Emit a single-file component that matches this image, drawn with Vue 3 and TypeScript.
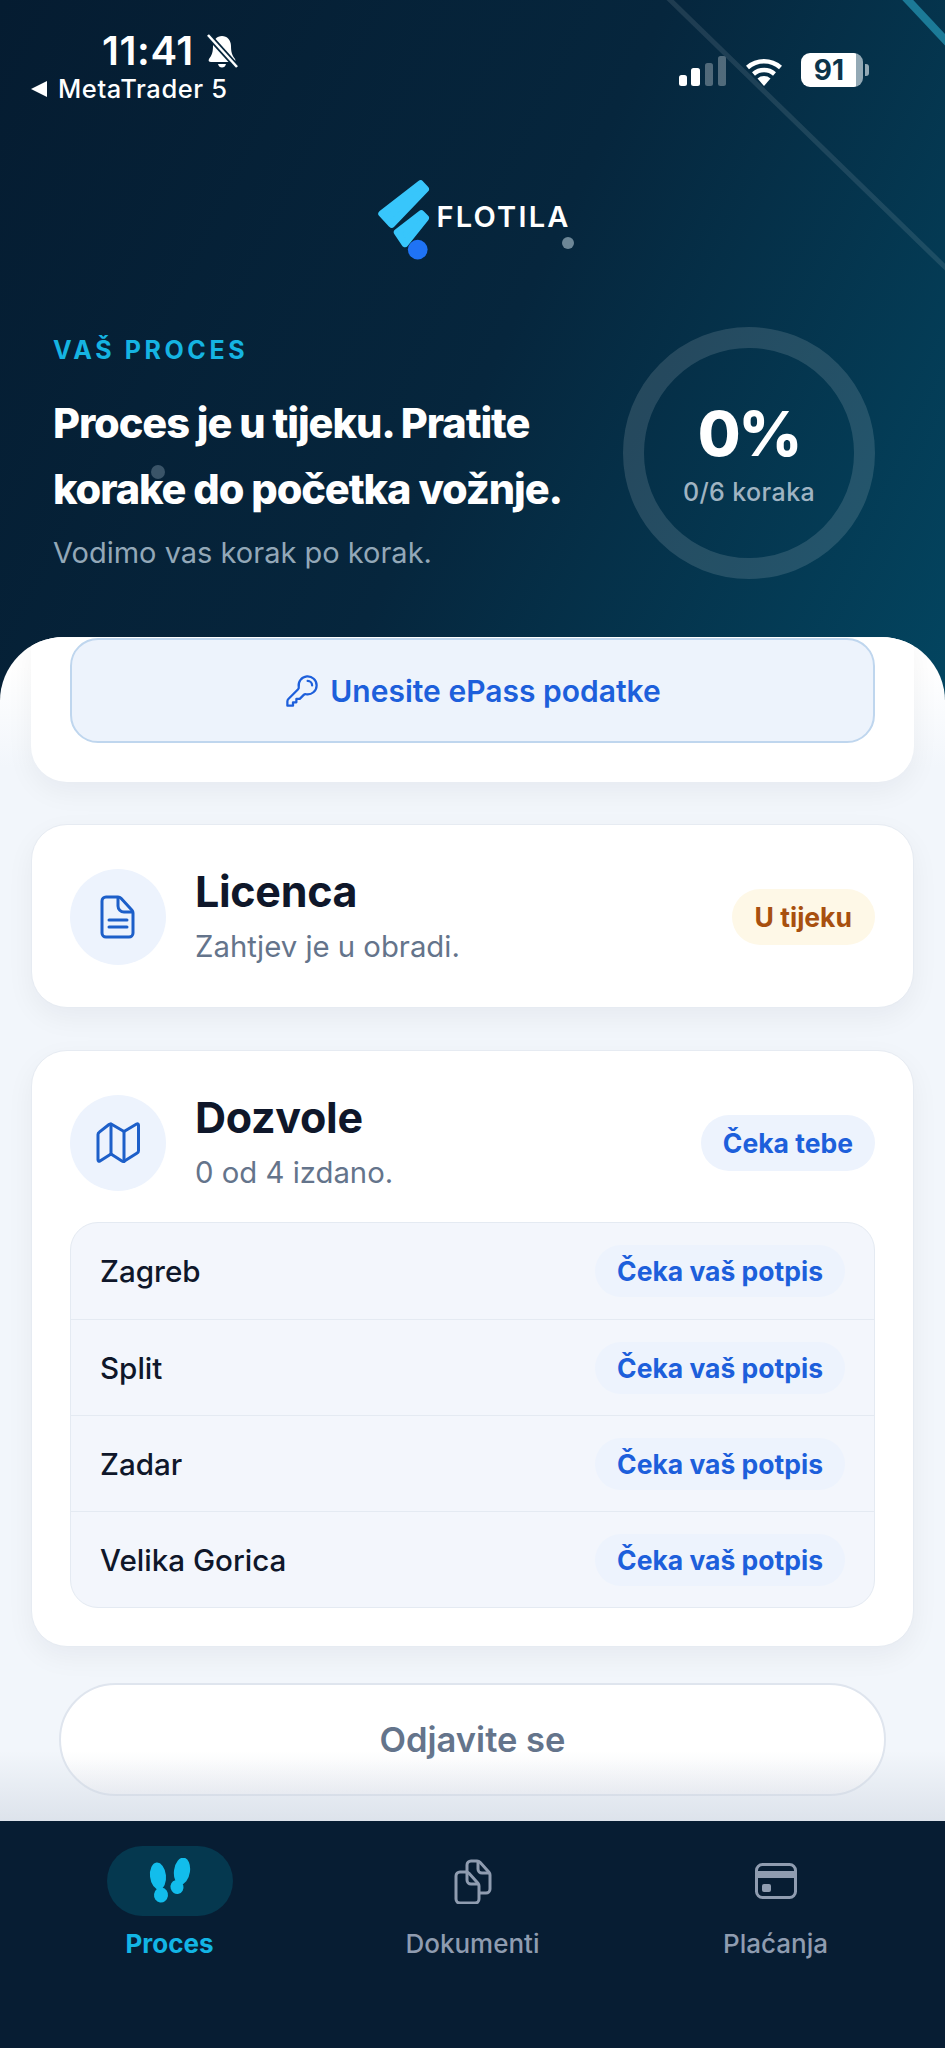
<template>
  <div class="page">
    <div class="streaks" aria-hidden="true">
      <svg width="945" height="640" viewBox="0 0 945 640">
        <line x1="666" y1="-4" x2="949" y2="271" stroke="#ffffff" stroke-opacity="0.1" stroke-width="5" />
        <line x1="904" y1="-4" x2="949" y2="44" stroke="#2fb4d6" stroke-opacity="0.55" stroke-width="8" />
        <circle cx="568" cy="243" r="6" fill="#6d8797" />
        <circle cx="158" cy="472" r="7" fill="#3a5468" />
      </svg>
    </div>

    <header class="hero">
      <div class="status">
        <div class="status-left">
          <div class="clock">
            <span>11:41</span>
            <svg class="bell" viewBox="0 0 32 34" width="32" height="34">
              <path d="M16 2c-5 0-9 4-9 10 0 6-1 9-4 13-1 2 0 3 2 3h22c2 0 3-1 2-3-3-4-4-7-4-13 0-6-4-10-9-10z" fill="#fff" />
              <path d="M12 30h8c-.6 2.400-2 3.600-4 3.600s-3.400-1.200-4-3.600z" fill="#fff" />
              <path d="M2 1l29 32" stroke="#06253b" stroke-width="6" />
              <path d="M2 1l29 32" stroke="#fff" stroke-width="2.600" />
            </svg>
          </div>
          <div class="back-app">
            <svg viewBox="0 0 18 18" width="18" height="18"><path d="M17 1v16L1 9z" fill="#fff" /></svg>
            <span>MetaTrader 5</span>
          </div>
        </div>
        <div class="status-right">
          <svg viewBox="0 0 48 31" width="48" height="31">
            <rect x="0" y="20" width="8" height="11" rx="2.500" fill="#fff" />
            <rect x="12" y="13" width="9" height="18" rx="2.500" fill="#fff" />
            <rect x="26" y="8" width="8" height="23" rx="2.500" fill="#fff" fill-opacity="0.3" />
            <rect x="39" y="1" width="8" height="30" rx="2.500" fill="#fff" fill-opacity="0.3" />
          </svg>
          <svg viewBox="0 0 42 31" width="42" height="31">
            <path d="M21 31l-6.500-7.500a10 10 0 0 1 13 0z" fill="#fff" />
            <path d="M10.500 19a16 16 0 0 1 21 0" fill="none" stroke="#fff" stroke-width="4.500" />
            <path d="M4.500 12.500a25 25 0 0 1 33 0" fill="none" stroke="#fff" stroke-width="4.500" />
          </svg>
          <div class="battery">
            <div class="battery-body"><span>91</span></div>
            <i class="battery-nub"></i>
          </div>
        </div>
      </div>

      <div class="brand">
        <svg class="brand-mark" viewBox="100 50 170 250" width="60" height="88">
          <g fill="#38c6fb" stroke="#38c6fb" stroke-width="20" stroke-linejoin="round">
            <polygon points="232,75 246,90 150,190 122,160" />
            <polygon points="234,160 246,172 188,245 166,213" />
          </g>
          <circle cx="224" cy="262" r="28" fill="#1f73f5" />
        </svg>
        <span class="brand-name">FLOTILA</span>
      </div>

      <div class="summary">
        <div class="summary-copy">
          <p class="eyebrow">VAŠ PROCES</p>
          <h1>Proces je u tijeku. Pratite<br />korake do početka vožnje.</h1>
          <p class="lead">Vodimo vas korak po korak.</p>
        </div>
        <div class="ring">
          <strong>0%</strong>
          <span>0/6 koraka</span>
        </div>
      </div>
    </header>

    <main class="sheet">
      <section class="card card-clipped">
        <button type="button" class="epass">
          <svg viewBox="0 0 24 24" width="36" height="36" fill="none" stroke="currentColor" stroke-width="1.500" stroke-linecap="round" stroke-linejoin="round">
            <path d="M15.750 5.250a3 3 0 0 1 3 3m3 0a6 6 0 0 1-7.029 5.912c-.563-.097-1.159.026-1.563.43L10.500 17.250H8.250v2.250H6v2.250H2.250v-2.818c0-.597.237-1.170.659-1.591l6.499-6.499c.404-.404.527-1 .43-1.563A6 6 0 1 1 21.750 8.250z" />
          </svg>
          <span>Unesite ePass podatke</span>
        </button>
      </section>

      <section class="card">
        <div class="card-head">
          <div class="icon-circle">
            <svg viewBox="0 0 36 44" width="36" height="44" fill="none" stroke="currentColor" stroke-width="3" stroke-linejoin="round" stroke-linecap="round">
              <path d="M6 2h12a4 4 0 0 1 3 1.300l11 12a4 4 0 0 1 1 2.700v20a4 4 0 0 1-4 4H6a4 4 0 0 1-4-4V6a4 4 0 0 1 4-4z" />
              <path d="M18 2.500V11a6 6 0 0 0 6 6h8.500" />
              <path d="M9 25h18M9 32h18" />
            </svg>
          </div>
          <div class="head-text">
            <h2>Licenca</h2>
            <p>Zahtjev je u obradi.</p>
          </div>
          <span class="badge badge-amber">U tijeku</span>
        </div>
      </section>

      <section class="card">
        <div class="card-head">
          <div class="icon-circle">
            <svg viewBox="0 0 44 42" width="44" height="42" fill="none" stroke="currentColor" stroke-width="3" stroke-linejoin="round" stroke-linecap="round">
              <path d="M2 12.500c0-1 .5-1.800 1.300-2.300L13 2.500c1-.7 2-.7 3 0l12 7 12.600-7.500c1.200-.6 1.900 0 1.900 1.200v25.600c0 1-.5 1.800-1.300 2.300L28.500 39c-.8.500-1.800.5-2.600 0L15 32 4 39c-1.100.7-2 .1-2-1.200z" />
              <path d="M15 2v30M28 9.500V39.500" />
            </svg>
          </div>
          <div class="head-text">
            <h2>Dozvole</h2>
            <p>0 od 4 izdano.</p>
          </div>
          <span class="badge badge-blue">Čeka tebe</span>
        </div>

        <ul class="permits">
          <li v-for="city in cities" :key="city">
            <span>{{ city }}</span>
            <em>Čeka vaš potpis</em>
          </li>
        </ul>
      </section>

      <button type="button" class="logout">Odjavite se</button>
      <div class="sheet-fade"></div>
    </main>

    <nav class="tabs">
      <div v-for="tab in tabs" :key="tab.label" class="tab" :class="{ active: tab.active }">
        <div class="tab-icon">
          <svg v-if="tab.icon === 'steps'" viewBox="0 0 46 46" width="46" height="46" fill="#12bdec">
            <ellipse cx="11" cy="18" rx="8" ry="13.500" transform="rotate(-6 11 18)" />
            <ellipse cx="14" cy="37" rx="7" ry="7.500" transform="rotate(8 14 37)" />
            <ellipse cx="35" cy="13" rx="8" ry="13.500" transform="rotate(8 35 13)" />
            <ellipse cx="30" cy="29" rx="6.500" ry="7" transform="rotate(-14 30 29)" />
          </svg>
          <svg v-else-if="tab.icon === 'docs'" viewBox="0 0 40 46" width="40" height="46" fill="none" stroke="#8f9cb0" stroke-width="3" stroke-linejoin="round">
            <path d="M3 18a4 4 0 0 1 4-4h6a4 4 0 0 1 3 1.300l9 10a4 4 0 0 1 1 2.700v13a4 4 0 0 1-4 4H7a4 4 0 0 1-4-4z" />
            <path d="M14 14v8a4 4 0 0 0 4 4h8" />
            <path d="M14 14V7a4 4 0 0 1 4-4h6a4 4 0 0 1 3 1.300l9 10a4 4 0 0 1 1 2.700v14a4 4 0 0 1-4 4h-7" />
            <path d="M25 3.500V11a4 4 0 0 0 4 4h7.500" />
          </svg>
          <svg v-else viewBox="0 0 42 36" width="42" height="36" fill="none" stroke="#8f9cb0" stroke-width="3">
            <rect x="1.500" y="1.500" width="39" height="33" rx="6" />
            <rect x="1.500" y="8" width="39" height="7" fill="#8f9cb0" stroke="none" />
            <rect x="7" y="21" width="9" height="8" rx="2" fill="#8f9cb0" stroke="none" />
          </svg>
        </div>
        <span>{{ tab.label }}</span>
      </div>
    </nav>
  </div>
</template>

<script setup lang="ts">
type TabIcon = 'steps' | 'docs' | 'card'

const cities: string[] = ['Zagreb', 'Split', 'Zadar', 'Velika Gorica']

const tabs: { label: string; icon: TabIcon; active?: boolean }[] = [
  { label: 'Proces', icon: 'steps', active: true },
  { label: 'Dokumenti', icon: 'docs' },
  { label: 'Plaćanja', icon: 'card' },
]
</script>

<style scoped>
.page {
  position: relative;
  display: flex;
  flex-direction: column;
  width: 945px;
  height: 2048px;
  overflow: hidden;
  font-family: Inter, 'Liberation Sans', sans-serif;
  background: linear-gradient(116deg, #051c31 0%, #06263d 52%, #034560 100%) no-repeat;
  background-size: 100% 700px;
}

.streaks {
  position: absolute;
  top: 0;
  left: 0;
  line-height: 0;
}

.hero {
  position: relative;
  height: 637px;
  flex: none;
}

.status {
  display: flex;
  justify-content: space-between;
  height: 102px;
  padding: 28px 76px 0 30px;
  color: #ffffff;
}

.clock {
  display: flex;
  align-items: center;
  gap: 12px;
  padding-left: 72px;
  font-size: 40px;
  font-weight: 600;
  letter-spacing: 0.6px;
  line-height: 46px;
}

.back-app {
  display: flex;
  align-items: center;
  gap: 10px;
  font-size: 25.500px;
  font-weight: 500;
  letter-spacing: 0.6px;
  line-height: 30px;
}

.status-right {
  display: flex;
  align-items: center;
  gap: 16px;
  height: 34px;
  margin-top: 25px;
}

.battery {
  display: flex;
  align-items: center;
  gap: 2px;
}

.battery-body {
  display: flex;
  align-items: center;
  justify-content: center;
  width: 62px;
  height: 34px;
  padding-right: 6px;
  box-sizing: border-box;
  border-radius: 9px;
  background: linear-gradient(90deg, #ffffff 89%, #93a9b5 89%);
  color: #0c344b;
  font-size: 28px;
  font-weight: 700;
}

.battery-nub {
  width: 4px;
  height: 12px;
  border-radius: 0 3px 3px 0;
  background: #93a9b5;
}

.brand {
  display: flex;
  align-items: flex-start;
  justify-content: center;
  gap: 2px;
  height: 88px;
  margin-top: 45px;
}

.brand-mark {
  flex: none;
}

.brand-name {
  margin-top: 25px;
  color: #ffffff;
  font-size: 29px;
  font-weight: 600;
  letter-spacing: 2.200px;
  line-height: 34px;
}

.summary {
  display: flex;
  justify-content: space-between;
  align-items: center;
  margin-top: 64px;
  padding: 0 70px 0 53px;
}

.eyebrow {
  margin: 0;
  color: #15b4e2;
  font-size: 25px;
  font-weight: 700;
  letter-spacing: 3.600px;
  line-height: 28px;
}

h1 {
  margin: 26px 0 0;
  color: #ffffff;
  font-size: 41.500px;
  font-weight: 800;
  letter-spacing: -1.100px;
  line-height: 66px;
}

.lead {
  margin: 13px 0 0;
  color: #93a8b8;
  font-size: 29px;
  line-height: 36px;
}

.ring {
  display: flex;
  flex-direction: column;
  align-items: center;
  justify-content: center;
  flex: none;
  box-sizing: border-box;
  width: 252px;
  height: 252px;
  border: 21px solid rgba(255, 255, 255, 0.13);
  border-radius: 50%;
}

.ring strong {
  color: #ffffff;
  font-size: 62px;
  font-weight: 800;
  letter-spacing: -2px;
  line-height: 70px;
}

.ring span {
  margin-top: 8px;
  color: #a0b4c2;
  font-size: 25px;
  font-weight: 500;
  letter-spacing: 0.4px;
  line-height: 30px;
}

.sheet {
  position: relative;
  flex: 1;
  overflow: hidden;
  display: flex;
  flex-direction: column;
  border-radius: 64px 64px 0 0;
  background: linear-gradient(180deg, #ffffff 0, #ffffff 30px, #f2f6fb 130px);
}

.card {
  margin: 42px 31px 0;
  padding: 44px 38px 38px;
  border: 1px solid #e6ebf2;
  border-radius: 36px;
  background: #ffffff;
  box-shadow: 0 10px 28px rgba(15, 23, 42, 0.05);
}

.card-clipped {
  margin-top: 0;
  padding: 1px 39px 39px;
  border: 0;
  border-radius: 0 0 36px 36px;
}

.epass {
  display: flex;
  align-items: center;
  justify-content: center;
  gap: 10px;
  width: 100%;
  height: 105px;
  border: 2px solid #bfd6ee;
  border-radius: 28px;
  background: #edf3fc;
  color: #1d5fdb;
  font-family: inherit;
  font-size: 30px;
  font-weight: 600;
}

.card-head {
  display: flex;
  align-items: center;
  gap: 29px;
  margin-bottom: 4px;
}

.icon-circle {
  display: flex;
  align-items: center;
  justify-content: center;
  flex: none;
  width: 96px;
  height: 96px;
  border-radius: 50%;
  background: #edf3fd;
  color: #1d5fc9;
}

.head-text {
  flex: 1;
}

h2 {
  margin: 0;
  color: #0f172a;
  font-size: 43px;
  font-weight: 700;
  letter-spacing: -0.300px;
  line-height: 44px;
}

.head-text p {
  margin: 16px 0 0;
  color: #64748b;
  font-size: 29.300px;
  line-height: 36px;
}

.badge {
  padding: 0 22px;
  border-radius: 28px;
  font-size: 26.500px;
  font-weight: 700;
  line-height: 56px;
}

.badge-amber {
  padding: 0 23px;
  background: #fef8e7;
  color: #a8500f;
}

.badge-blue {
  background: #edf3fd;
  color: #1d5fdb;
}

.permits {
  margin: 31px 0 0;
  padding: 0;
  list-style: none;
  border: 1px solid #e4eaf2;
  border-radius: 28px;
  background: #f3f6fc;
}

.permits li {
  display: flex;
  align-items: center;
  justify-content: space-between;
  box-sizing: border-box;
  height: 96px;
  padding: 0 29px;
  border-top: 1px solid #e4eaf2;
}

.permits li:first-child {
  border-top: 0;
}

.permits span {
  color: #0f172a;
  font-size: 29.600px;
  font-weight: 500;
}

.permits em {
  padding: 0 22px;
  border-radius: 26px;
  background: #edf3fd;
  color: #1d5fdb;
  font-size: 26.500px;
  font-style: normal;
  font-weight: 700;
  line-height: 52px;
}

.logout {
  flex: none;
  width: 827px;
  height: 113px;
  margin: 36px 0 0 59px;
  border: 2px solid #dfe5ee;
  border-radius: 57px;
  background: linear-gradient(180deg, #ffffff 70%, #f6f7fa 100%);
  color: #64748b;
  font-family: inherit;
  font-size: 34.500px;
  font-weight: 600;
}

.sheet-fade {
  position: absolute;
  left: 0;
  right: 0;
  bottom: 0;
  height: 70px;
  background: linear-gradient(180deg, rgba(200, 208, 220, 0), rgba(200, 208, 220, 0.5));
  pointer-events: none;
}

.tabs {
  display: grid;
  grid-template-columns: repeat(3, 1fr);
  flex: none;
  height: 227px;
  padding: 25px 18px 0;
  box-sizing: border-box;
  background: #071d33;
}

.tab {
  display: flex;
  flex-direction: column;
  align-items: center;
  color: #8f9cb0;
  font-size: 26px;
  font-weight: 500;
}

.tab-icon {
  display: flex;
  align-items: center;
  justify-content: center;
  width: 126px;
  height: 70px;
  border-radius: 35px;
}

.tab span {
  margin-top: 11px;
  line-height: 34px;
}

.tab.active {
  color: #12b5e5;
  font-weight: 700;
}

.tab.active .tab-icon {
  background: #05384f;
}
</style>
